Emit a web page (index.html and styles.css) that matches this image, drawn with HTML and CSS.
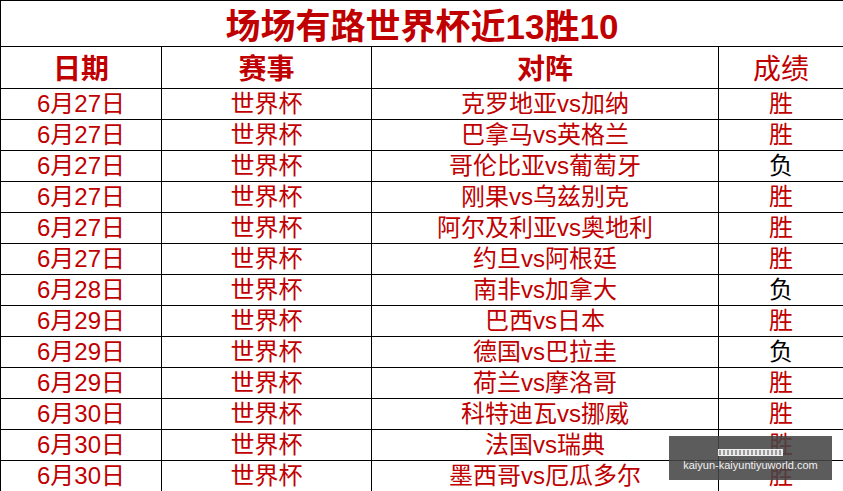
FILE: index.html
```html
<!DOCTYPE html>
<html lang="zh">
<head>
<meta charset="utf-8">
<title>场场有路世界杯近13胜10</title>
<link rel="stylesheet" href="styles.css">
</head>
<body>
<div class="page">
<table class="sheet">
  <colgroup>
    <col class="c-date"><col class="c-comp"><col class="c-match"><col class="c-res">
  </colgroup>
  <tr class="title-row"><td colspan="4" class="title">场场有路世界杯近13胜10</td></tr>
  <tr class="head-row">
    <td class="bold">日期</td><td class="bold">赛事</td><td class="bold">对阵</td><td>成绩</td>
  </tr>
  <tr><td>6月27日</td><td>世界杯</td><td>克罗地亚vs加纳</td><td>胜</td></tr>
  <tr><td>6月27日</td><td>世界杯</td><td>巴拿马vs英格兰</td><td>胜</td></tr>
  <tr><td>6月27日</td><td>世界杯</td><td>哥伦比亚vs葡萄牙</td><td class="lose">负</td></tr>
  <tr><td>6月27日</td><td>世界杯</td><td>刚果vs乌兹别克</td><td>胜</td></tr>
  <tr><td>6月27日</td><td>世界杯</td><td>阿尔及利亚vs奥地利</td><td>胜</td></tr>
  <tr><td>6月27日</td><td>世界杯</td><td>约旦vs阿根廷</td><td>胜</td></tr>
  <tr><td>6月28日</td><td>世界杯</td><td>南非vs加拿大</td><td class="lose">负</td></tr>
  <tr><td>6月29日</td><td>世界杯</td><td>巴西vs日本</td><td>胜</td></tr>
  <tr><td>6月29日</td><td>世界杯</td><td>德国vs巴拉圭</td><td class="lose">负</td></tr>
  <tr><td>6月29日</td><td>世界杯</td><td>荷兰vs摩洛哥</td><td>胜</td></tr>
  <tr><td>6月30日</td><td>世界杯</td><td>科特迪瓦vs挪威</td><td>胜</td></tr>
  <tr><td>6月30日</td><td>世界杯</td><td>法国vs瑞典</td><td>胜</td></tr>
  <tr><td>6月30日</td><td>世界杯</td><td>墨西哥vs厄瓜多尔</td><td>胜</td></tr>
</table>
<div class="watermark">
  <div class="tofu"></div>
  <div class="wm-text">kaiyun-kaiyuntiyuworld.com</div>
</div>
</div>
</body>
</html>
```
FILE: styles.css
```css
html, body {
  margin: 0;
  padding: 0;
  background: #ffffff;
  overflow: hidden;
}
.page {
  position: relative;
  width: 843px;
  height: 491px;
  overflow: hidden;
}
.sheet {
  border-collapse: collapse;
  width: 843px;
  table-layout: fixed;
  font-family: "Liberation Sans", "Noto Sans CJK SC", sans-serif;
  color: #c00000;
}
.c-date { width: 161px; }
.c-comp { width: 210px; }
.c-match { width: 347px; }
.c-res { width: 125px; }
.sheet td {
  border: 1px solid #000;
  padding: 0;
  text-align: center;
  vertical-align: middle;
  font-size: 24px;
  line-height: 26px;
  height: 30px;
  white-space: nowrap;
}
.sheet .title-row td {
  height: 38px;
  font-size: 35px;
  font-weight: 700;
  padding-top: 7px;
  line-height: 36px;
}
.sheet .head-row td {
  height: 36px;
  font-size: 28px;
  padding-top: 5px;
  line-height: 30px;
}
.sheet td.bold { font-weight: 700; }
.sheet td.lose { color: #000; }
.watermark {
  position: absolute;
  left: 669px;
  top: 436px;
  width: 163px;
  height: 44px;
  background: rgba(70, 70, 70, 0.88);
  display: flex;
  flex-direction: column;
  align-items: center;
  padding-top: 13px;
  box-sizing: border-box;
}
.tofu {
  width: 65px;
  height: 7px;
  background: repeating-linear-gradient(90deg, #e8e8e8 0 1px, #9a9a9a 1px 3px, #e8e8e8 3px 4px);
  border-top: 1px solid #eee;
  border-bottom: 1px solid #eee;
  box-sizing: border-box;
}
.wm-text {
  margin-top: 3px;
  font-family: "Liberation Sans", sans-serif;
  font-size: 11px;
  line-height: 13px;
  color: #f0f0f0;
}
```
